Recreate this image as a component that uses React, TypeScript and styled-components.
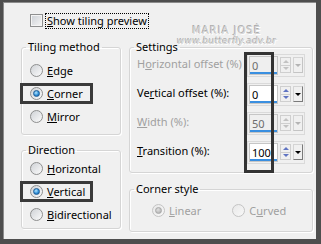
import React from "react";
import styled, { createGlobalStyle } from "styled-components";

const GlobalStyle = createGlobalStyle`
  html, body { margin: 0; padding: 0; background: #f0f0f0; }
  body { font-family: "Noto Sans", "DejaVu Sans", sans-serif; }
`;

const Frame = styled.div`
  position: relative;
  width: 321px;
  height: 244px;
  box-sizing: border-box;
  background: #f0f0f0;
  border-style: solid;
  border-color: #4e4e4e;
  border-width: 2px 5px 5px 3px;
  box-shadow: inset 1px 1px 0 #8c8c8c;
  font-size: 11px;
  color: #000;
  padding: 11px 3px 0 18px;
`;

const TopRow = styled.label`
  display: flex;
  align-items: center;
  gap: 3px;
  height: 15px;
  margin-left: 9px;
`;

const CheckBox = styled.span`
  width: 13px;
  height: 13px;
  box-sizing: border-box;
  border: 1px solid #8e8f8f;
  box-shadow: inset 0 0 0 1px #f4f4f4;
  background: linear-gradient(135deg, #cbcfd5, #f6f6f6);
  flex: none;
`;

const Focus = styled.span`
  outline: 1px dotted #000;
  padding: 0 1px;
  line-height: 14px;
`;

const Watermark = styled.div`
  position: absolute;
  top: 23px;
  left: 166px;
  width: 116px;
  text-align: center;
  color: #d4d4d4;
  text-shadow: -1px -1px 0 #acacac, 1px 1px 0 #fff;
  line-height: 14px;
`;

const WmTitle = styled.div`
  font: 10px "DejaVu Sans", sans-serif;
  letter-spacing: 1px;
`;

const WmUrl = styled.div`
  font: italic 9px "DejaVu Sans", sans-serif;
  letter-spacing: 0.3px;
`;

const Columns = styled.div`
  display: flex;
  gap: 8px;
  margin-top: 12px;
`;

const Column = styled.div<{ $w: number; $gap: number }>`
  width: ${(p) => p.$w}px;
  display: flex;
  flex-direction: column;
  gap: ${(p) => p.$gap}px;
`;

const Group = styled.fieldset<{ $pad: string }>`
  margin: 0;
  min-width: 0;
  border: 1px solid #d5d5d5;
  border-radius: 3px;
  box-shadow: inset 1px 1px 0 #fff, 1px 1px 0 #fff;
  padding: ${(p) => p.$pad};
  display: flex;
  flex-direction: column;
`;

const Caption = styled.legend`
  padding: 0 2px;
  margin-left: 4px;
  line-height: 14px;
`;

const RadioRow = styled.label<{ $marked?: boolean; $disabled?: boolean }>`
  display: flex;
  align-items: center;
  gap: 4px;
  height: 15px;
  box-sizing: border-box;
  width: ${(p) => (p.$marked ? "67px" : "fit-content")};
  padding-left: 7px;
  margin-left: 1px;
  color: ${(p) => (p.$disabled ? "#a0a0a0" : "#000")};
  outline: ${(p) => (p.$marked ? "3px solid #3a3a3a" : "none")};
`;

const RadioDot = styled.span<{ $checked?: boolean; $disabled?: boolean }>`
  width: 13px;
  height: 13px;
  box-sizing: border-box;
  border-radius: 50%;
  flex: none;
  display: flex;
  align-items: center;
  justify-content: center;
  border: 1px solid ${(p) => (p.$disabled ? "#c4c4c4" : "#8e8f8f")};
  background: ${(p) =>
    p.$disabled
      ? "linear-gradient(135deg, #e8e8e8, #f8f8f8)"
      : "linear-gradient(135deg, #cfd2d6, #fbfbfb)"};
  &::after {
    content: "";
    display: ${(p) => (p.$checked ? "block" : "none")};
    width: 5px;
    height: 5px;
    border-radius: 50%;
    border: 1px solid ${(p) => (p.$disabled ? "#a8a8a8" : "#1f5d96")};
    background: ${(p) =>
      p.$disabled
        ? "radial-gradient(circle at 40% 35%, #e0e0e0, #a8a8a8)"
        : "radial-gradient(circle at 40% 35%, #b4e6ff, #2a8ad4 60%, #135a9c)"};
  }
`;

const RadioList = styled.div<{ $gap: number }>`
  display: flex;
  flex-direction: column;
  gap: ${(p) => p.$gap}px;
`;

const SettingRow = styled.div<{ $disabled?: boolean }>`
  display: flex;
  align-items: center;
  height: 23px;
  padding-left: 7px;
  padding-right: 7px;
  color: ${(p) => (p.$disabled ? "#a0a0a0" : "#000")};
`;

const SettingLabel = styled.span`
  flex: 1;
  margin-top: -4px;
  white-space: nowrap;
`;

const Spin = styled.div`
  display: flex;
  gap: 2px;
  width: 58px;
  height: 23px;
  box-sizing: border-box;
  border: 1px solid #dadada;
  padding: 1px;
`;

const Field = styled.div<{ $disabled?: boolean }>`
  position: relative;
  width: 29px;
  box-sizing: border-box;
  border: 1px solid #c6c6c6;
  background: ${(p) => (p.$disabled ? "#efefef" : "#fff")};
  color: ${(p) => (p.$disabled ? "#6d6d6d" : "#000")};
  font-size: 11px;
  line-height: 18px;
  padding-left: 2px;
  &::after {
    content: "";
    position: absolute;
    left: 0;
    right: 0;
    bottom: 0;
    height: 2px;
    background: #3a8fe0;
  }
`;

const Arrows = styled.div`
  display: flex;
  flex-direction: column;
  width: 11px;
  margin: 1px 0 2px;
  border: 1px solid #cfcfcf;
  box-sizing: border-box;
`;

const ArrowHalf = styled.div<{ $up?: boolean; $disabled?: boolean }>`
  flex: 1;
  display: flex;
  align-items: center;
  justify-content: center;
  & + & { border-top: 1px solid #cfcfcf; }
  &::before {
    content: "";
    border-left: 3px solid transparent;
    border-right: 3px solid transparent;
    ${(p) => (p.$up ? "border-bottom" : "border-top")}: 3px solid
      ${(p) => (p.$disabled ? "#c2c2c2" : "#6074c2")};
  }
`;

const Drop = styled.div<{ $disabled?: boolean }>`
  width: 10px;
  margin: 1px 0 2px;
  box-sizing: border-box;
  border: 1px solid #d4d4d4;
  border-right-color: ${(p) => (p.$disabled ? "#c4c4c4" : "#7a7a7a")};
  border-bottom-color: ${(p) => (p.$disabled ? "#c4c4c4" : "#7a7a7a")};
  display: flex;
  align-items: center;
  justify-content: center;
  &::before {
    content: "";
    border-left: 3px solid transparent;
    border-right: 3px solid transparent;
    border-top: 3px solid ${(p) => (p.$disabled ? "#b4b4b4" : "#000")};
  }
`;

const SettingList = styled.div`
  display: flex;
  flex-direction: column;
  gap: 6px;
`;

const Marker = styled.div`
  position: absolute;
  left: 241px;
  top: 50px;
  width: 30px;
  height: 121px;
  box-sizing: border-box;
  border: 3px solid #333;
  pointer-events: none;
`;

const StyleRow = styled.div`
  display: flex;
  gap: 23px;
  padding-left: 14px;
`;

type RadioProps = {
  label: React.ReactNode;
  checked?: boolean;
  marked?: boolean;
  disabled?: boolean;
};

const Radio = ({ label, checked, marked, disabled }: RadioProps) => (
  <RadioRow $marked={marked} $disabled={disabled}>
    <RadioDot $checked={checked} $disabled={disabled} />
    <span>{label}</span>
  </RadioRow>
);

type SettingProps = {
  label: React.ReactNode;
  value: string;
  disabled?: boolean;
};

const Setting = ({ label, value, disabled }: SettingProps) => (
  <SettingRow $disabled={disabled}>
    <SettingLabel>{label}</SettingLabel>
    <Spin>
      <Field $disabled={disabled}>{value}</Field>
      <Arrows>
        <ArrowHalf $up $disabled={disabled} />
        <ArrowHalf $disabled={disabled} />
      </Arrows>
      <Drop $disabled={disabled} />
    </Spin>
  </SettingRow>
);

export default function App() {
  return (
    <>
      <GlobalStyle />
      <Frame>
        <TopRow>
          <CheckBox />
          <Focus>
            <u>S</u>how tiling preview
          </Focus>
        </TopRow>
        <Watermark>
          <WmTitle>MARIA JOSÉ</WmTitle>
          <WmUrl>www.butterfly.adv.br</WmUrl>
        </Watermark>
        <Columns>
          <Column $w={100} $gap={8}>
            <Group $pad="9px 0 10px">
              <Caption>Tiling method</Caption>
              <RadioList $gap={8}>
                <Radio label={<><u>E</u>dge</>} />
                <Radio label={<><u>C</u>orner</>} checked marked />
                <Radio label={<><u>M</u>irror</>} />
              </RadioList>
            </Group>
            <Group $pad="4px 0 6px">
              <Caption>Direction</Caption>
              <RadioList $gap={8}>
                <Radio label={<><u>H</u>orizontal</>} />
                <Radio label={<><u>V</u>ertical</>} checked marked />
                <Radio label={<><u>B</u>idirectional</>} />
              </RadioList>
            </Group>
          </Column>
          <Column $w={184} $gap={9}>
            <Group $pad="0 0 8px">
              <Caption>Settings</Caption>
              <SettingList>
                <Setting label={<>H<u>o</u>rizontal offset (%)</>} value="0" disabled />
                <Setting label={<>Ve<u>r</u>tical offset (%):</>} value="0" />
                <Setting label={<><u>W</u>idth (%):</>} value="50" disabled />
                <Setting label={<><u>T</u>ransition (%):</>} value="100" />
              </SettingList>
            </Group>
            <Group $pad="7px 0 13px">
              <Caption>Corner style</Caption>
              <StyleRow>
                <Radio label={<><u>L</u>inear</>} checked disabled />
                <Radio label={<>C<u>u</u>rved</>} disabled />
              </StyleRow>
            </Group>
          </Column>
        </Columns>
        <Marker />
      </Frame>
    </>
  );
}
